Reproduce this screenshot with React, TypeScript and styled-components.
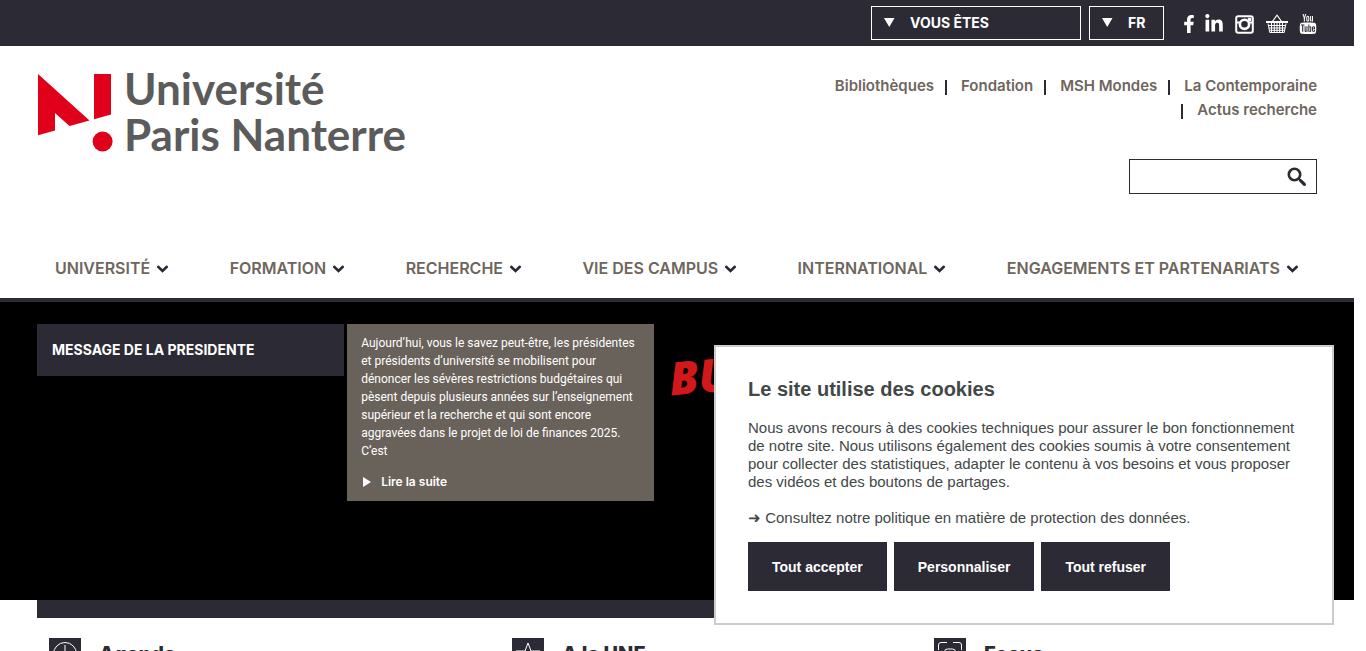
import React from "react";
import styled, { createGlobalStyle } from "styled-components";
import { FaFacebookF, FaLinkedinIn } from "react-icons/fa";
import { TfiYoutube } from "react-icons/tfi";

const dark = "#2c2b35";
const taupe = "#6e665d";
const sans = 'Inter, "Liberation Sans", sans-serif';

const GlobalStyle = createGlobalStyle`
  *, *::before, *::after { box-sizing: border-box; }
  body { margin: 0; background: #fff; color: ${dark}; font-family: ${sans}; }
  a { color: inherit; text-decoration: none; }
  h1, h2, p, ul { margin: 0; padding: 0; }
  ul { list-style: none; }
`;

const Page = styled.div`
  height: 100vh;
  overflow: hidden;
  padding-right: 12px;
`;

const TopBar = styled.div`
  display: flex;
  justify-content: flex-end;
  align-items: flex-start;
  height: 46px;
  padding: 6px 39px 0 37px;
  background: ${dark};
`;

const Picker = styled.label<{ $width: number }>`
  position: relative;
  width: ${(p) => p.$width}px;
  height: 34px;
  margin-right: 8px;
  color: #fff;

  svg {
    position: absolute;
    left: 13px;
    top: 12px;
    pointer-events: none;
  }
`;

const PickerSelect = styled.select`
  appearance: none;
  width: 100%;
  height: 100%;
  padding: 0 0 0 38px;
  border: 1px solid #fff;
  border-radius: 0;
  background: transparent;
  color: #fff;
  font: 700 14px/20px ${sans};
`;

const Social = styled.nav`
  display: flex;
  align-items: center;
  height: 36px;
  gap: 12px;
  margin-left: 12px;
  color: #fff;
`;

const SocialLink = styled.a<{ $width: number }>`
  display: flex;
  justify-content: center;
  width: ${(p) => p.$width}px;

  svg { flex: none; }
`;

const Header = styled.header`
  display: flex;
  justify-content: space-between;
  height: 194px;
  padding: 28px 37px 0 38px;
`;

const Logo = styled.a`
  display: flex;
  gap: 10px;
  height: 82px;
`;

const LogoName = styled.span`
  color: #5b5b5b;
  font: 700 44px/46px Lato, sans-serif;
  margin-top: -9px;
  white-space: nowrap;
`;

const HeaderSide = styled.div`
  display: flex;
  flex-direction: column;
  align-items: flex-end;
  width: 500px;
`;

const Partners = styled.ul`
  display: flex;
  flex-wrap: wrap;
  justify-content: flex-end;
  color: ${taupe};
  font: 600 15px/24px ${sans};

  li { display: flex; align-items: center; }
  li + li::before {
    content: "";
    width: 2px;
    height: 15px;
    margin: 3px 14px 0 11px;
    background: ${dark};
  }
`;

const Search = styled.form`
  display: flex;
  width: 188px;
  height: 35px;
  margin-top: 37px;
  border: 1px solid ${dark};

  input {
    flex: 1;
    min-width: 0;
    border: 0;
    padding: 0 8px;
    background: transparent;
    font: 14px/20px ${sans};
  }
  button {
    display: flex;
    align-items: center;
    width: 29px;
    padding: 0;
    border: 0;
    background: transparent;
  }
`;

const MainNav = styled.nav`
  display: flex;
  justify-content: space-between;
  align-items: center;
  height: 62px;
  padding: 0 55px 2px;
  border-bottom: 4px solid ${dark};
`;

const NavLink = styled.a`
  display: flex;
  align-items: center;
  gap: 6px;
  color: ${taupe};
  font: 600 16px/20px ${sans};

  svg { margin-top: 2px; }
`;

const Hero = styled.section`
  display: flex;
  align-items: flex-start;
  gap: 3px;
  height: 298px;
  padding: 22px 37px 0;
  background: #000;
  color: #fff;
`;

const HeroTitle = styled.h2`
  width: 24%;
  padding: 16px 15px;
  background: ${dark};
  font: 700 14px/20px ${sans};
`;

const HeroText = styled.div`
  width: 24%;
  padding: 10px 14px;
  background: #69625a;
  font: 400 12px/18px Roboto, ${sans};
`;

const ReadMore = styled.a`
  display: flex;
  align-items: center;
  gap: 10px;
  margin-top: 13px;
  padding-left: 2px;
  font-family: ${sans};
  font-weight: 600;
`;

const Slogan = styled.span`
  margin: 24px 0 0 12px;
  color: #d3181b;
  font: italic 800 46px/54px "Open Sans", sans-serif;
  rotate: -5deg;
`;

const Strip = styled.div`
  height: 18px;
  margin: 0 37px;
  background: ${dark};
`;

const Columns = styled.main`
  display: grid;
  grid-template-columns: 463fr 422fr 371fr;
  padding: 20px 49px;
`;

const Column = styled.section`
  display: flex;
  align-items: flex-start;
  gap: 18px;
  h2 { font: 800 20px/32px ${sans}; }
`;

const Cookies = styled.section`
  position: fixed;
  right: 32px;
  bottom: 26px;
  width: 620px;
  padding: 30px 32px 32px;
  border: 2px solid #ccc;
  background: #fff;
  color: #424848;
  font: 15px/18px "Liberation Sans", Arial, sans-serif;

  h2 { font-size: 20px; line-height: 24px; }
  p { margin-top: 18px; }
`;

const CookieActions = styled.div`
  display: flex;
  gap: 7px;
  margin-top: 15px;
`;

const CookieButton = styled.button`
  height: 49px;
  padding: 0 24px;
  border: 0;
  background: ${dark};
  color: #fff;
  font: 700 14px/18px "Liberation Sans", Arial, sans-serif;
`;

const Triangle = () => (
  <svg width="11" height="9" viewBox="0 0 11 9" aria-hidden="true">
    <path d="M0 0h10.500L5.250 9z" fill="#fff" />
  </svg>
);

const Chevron = () => (
  <svg width="13" height="10" viewBox="0 0 13 10" fill="none" aria-hidden="true">
    <path d="M2.200 2.800 6.500 7l4.300-4.200" stroke={dark} strokeWidth="2.600" strokeLinecap="round" />
  </svg>
);

const InstagramIcon = () => (
  <svg width="19" height="19" viewBox="0 0 19 19" fill="none" aria-hidden="true">
    <rect x="1.200" y="1.200" width="16.600" height="16.600" rx="2" stroke="#fff" strokeWidth="2" />
    <path d="M1.500 6.500h3.500v2h-3.500zM14 6.500h3.500v2h-3.500z" fill="#fff" />
    <circle cx="9.500" cy="9.300" r="4.600" stroke="#fff" strokeWidth="2.600" />
    <path d="M12.800 2.800h3.400v3.400h-3.400z" fill="#fff" />
  </svg>
);

const BasketIcon = () => (
  <svg width="22" height="20" viewBox="0 0 22 20" fill="none" stroke="#fff" aria-hidden="true">
    <path d="M6 8 11 1.200 16 8" strokeWidth="1.200" />
    <path d="M0 8h22" strokeWidth="2" />
    <path d="M2 9.500 3.800 18.500h14.400L20 9.500M2.500 11.500h17M3 14h16M3.500 16.300h15M5.500 9v9M8.300 9v9M11 9v9M13.700 9v9M16.500 9v9" />
  </svg>
);

const SearchIcon = () => (
  <svg width="20" height="20" viewBox="0 0 20 20" fill="none" stroke={dark} aria-hidden="true">
    <circle cx="7.500" cy="7.500" r="5.700" strokeWidth="2.600" />
    <path d="m11.800 11.800 1.800 1.800" strokeWidth="2" />
    <path d="m13.600 13.600 3.800 3.800" strokeWidth="3.200" strokeLinecap="round" />
  </svg>
);

const LogoMark = () => (
  <svg width="76" height="80" viewBox="0 0 76 80" fill="#e1001a" aria-hidden="true">
    <path d="M0 0 51.500 46.500 31.500 52 17 39v17.500L0 61.200zM56 0h17v40.500l-17 4.700z" />
    <circle cx="64.600" cy="67.500" r="10" />
  </svg>
);

const ColumnIcon = ({ children }: { children: React.ReactNode }) => (
  <svg width="32" height="32" viewBox="0 0 32 32" fill="none" stroke="#fff" aria-hidden="true">
    <path d="M0 0h32v32H0z" fill={dark} stroke="none" />
    {children}
  </svg>
);

const partners = ["Bibliothèques", "Fondation", "MSH Mondes", "La Contemporaine", "Actus recherche"];
const sections = ["UNIVERSITÉ", "FORMATION", "RECHERCHE", "VIE DES CAMPUS", "INTERNATIONAL", "ENGAGEMENTS ET PARTENARIATS"];

export default function App() {
  return (
    <Page>
      <GlobalStyle />
      <TopBar>
        <Picker $width={210}>
          <Triangle />
          <PickerSelect aria-label="Vous êtes"><option>VOUS ÊTES</option></PickerSelect>
        </Picker>
        <Picker $width={75}>
          <Triangle />
          <PickerSelect aria-label="Langue"><option>FR</option></PickerSelect>
        </Picker>
        <Social>
          <SocialLink $width={9} href="#facebook" aria-label="Facebook"><FaFacebookF size={18} /></SocialLink>
          <SocialLink $width={18} href="#linkedin" aria-label="LinkedIn"><FaLinkedinIn size={20} /></SocialLink>
          <SocialLink $width={19} href="#instagram" aria-label="Instagram"><InstagramIcon /></SocialLink>
          <SocialLink $width={22} href="#boutique" aria-label="Boutique"><BasketIcon /></SocialLink>
          <SocialLink $width={15} href="#youtube" aria-label="YouTube"><TfiYoutube size={20} /></SocialLink>
        </Social>
      </TopBar>
      <Header>
        <Logo href="#accueil">
          <LogoMark />
          <LogoName>Université<br />Paris Nanterre</LogoName>
        </Logo>
        <HeaderSide>
          <Partners>
            {partners.map((name) => <li key={name}><a href="#partenaire">{name}</a></li>)}
          </Partners>
          <Search>
            <input type="text" aria-label="Rechercher" />
            <button type="button" aria-label="Lancer la recherche"><SearchIcon /></button>
          </Search>
        </HeaderSide>
      </Header>
      <MainNav>
        {sections.map((name) => <NavLink href="#menu" key={name}>{name}<Chevron /></NavLink>)}
      </MainNav>
      <Hero>
        <HeroTitle>MESSAGE DE LA PRESIDENTE</HeroTitle>
        <HeroText>
          <p>
            Aujourd’hui, vous le savez peut-être, les présidentes et présidents d’université se
            mobilisent pour dénoncer les sévères restrictions budgétaires qui pèsent depuis
            plusieurs années sur l’enseignement supérieur et la recherche et qui sont encore
            aggravées dans le projet de loi de finances 2025. C’est
          </p>
          <ReadMore href="#suite">
            <svg width="8" height="10" viewBox="0 0 8 10" aria-hidden="true"><path d="M0 0v10l8-5z" fill="#fff" /></svg>
            Lire la suite
          </ReadMore>
        </HeroText>
        <Slogan>BU</Slogan>
      </Hero>
      <Strip />
      <Columns>
        <Column>
          <ColumnIcon><circle cx="16" cy="16" r="11.500" /><path d="M16 7v10h7" /></ColumnIcon>
          <h2>Agenda</h2>
        </Column>
        <Column>
          <ColumnIcon><path d="m16 5 3 8h9l-7 5 3 9-8-5-8 5 3-9-7-5h9z" /></ColumnIcon>
          <h2>A la UNE</h2>
        </Column>
        <Column>
          <ColumnIcon><path d="M4.500 12V7q0-2.500 2.500-2.500h6M19 4.500h6q2.500 0 2.500 2.500v5M4.500 20v5q0 2.500 2.500 2.500h6M19 27.500h6q2.500 0 2.500-2.500v-5" /><rect x="10.500" y="11" width="11" height="11" rx="3" /><circle cx="16" cy="16.500" r="2.500" /></ColumnIcon>
          <h2>Focus</h2>
        </Column>
      </Columns>
      <Cookies role="dialog" aria-label="Cookies">
        <h2>Le site utilise des cookies</h2>
        <p>
          Nous avons recours à des cookies techniques pour assurer le bon fonctionnement de notre
          site. Nous utilisons également des cookies soumis à votre consentement pour collecter des
          statistiques, adapter le contenu à vos besoins et vous proposer des vidéos et des boutons
          de partages.
        </p>
        <p><a href="#donnees">➜ Consultez notre politique en matière de protection des données.</a></p>
        <CookieActions>
          <CookieButton>Tout accepter</CookieButton>
          <CookieButton>Personnaliser</CookieButton>
          <CookieButton>Tout refuser</CookieButton>
        </CookieActions>
      </Cookies>
    </Page>
  );
}
